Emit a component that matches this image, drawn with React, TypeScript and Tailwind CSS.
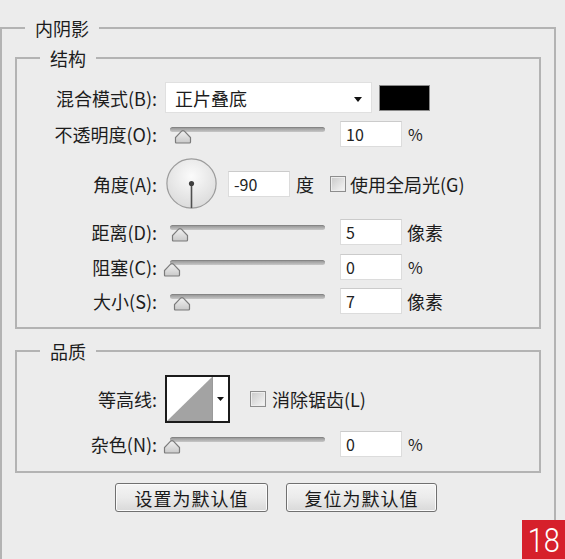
import React from "react";

function Thumb({ left }: { left: number }) {
  return (
    <svg
      className="absolute top-[8px]"
      style={{ left }}
      width="18"
      height="15"
      viewBox="0 0 18 15"
    >
      <defs>
        <linearGradient id="tg" x1="0" y1="0" x2="0" y2="1">
          <stop offset="0" stopColor="#f2f2f2" />
          <stop offset="1" stopColor="#c9c9c9" />
        </linearGradient>
      </defs>
      <path
        d="M1.5 13 L1.5 8.6 L7.6 2.2 Q9 0.9 10.4 2.2 L16.5 8.6 L16.5 13 Q16.5 14 15.5 14 L2.5 14 Q1.5 14 1.5 13 Z"
        fill="url(#tg)"
        stroke="#7b7b7b"
        strokeWidth="1.2"
      />
    </svg>
  );
}

function Slider({ pos }: { pos: number }) {
  return (
    <div className="relative ml-[6px] h-[26px] w-[162px] shrink-0 pl-[7px] pt-[6px]">
      <div className="h-[5px] rounded-full border-t border-[#858585] bg-linear-to-b from-[#9a9a9a] to-[#c8c8c8]" />
      <Thumb left={pos} />
    </div>
  );
}

function Field({ value, ml }: { value: string; ml: string }) {
  return (
    <div
      className={`${ml} flex h-[26px] w-[62px] shrink-0 items-center border border-[#dcdcdc] border-t-[#cbcbcb] bg-white pl-[5px] text-[16px] leading-none text-[#222]`}
    >
      {value}
    </div>
  );
}

function Label({ children }: { children: React.ReactNode }) {
  return (
    <div className="w-[140px] shrink-0 whitespace-nowrap text-right leading-none">
      {children}
    </div>
  );
}

function Check() {
  return (
    <div className="h-[16px] w-[16px] shrink-0 border border-[#8d8d8d] bg-linear-to-br from-[#c9c9c9] to-[#f7f7f7] shadow-[inset_0_0_0_1px_#ededed]" />
  );
}

function SliderRow({
  label,
  pos,
  value,
  unit,
  mt,
}: {
  label: string;
  pos: number;
  value: string;
  unit: string;
  mt: string;
}) {
  return (
    <div className={`${mt} flex h-[26px] items-center`}>
      <Label>{label}</Label>
      <Slider pos={pos} />
      <Field value={value} ml="ml-[15px]" />
      <div
        className={
          unit === "%"
            ? "ml-[6px] text-[16px] leading-none"
            : "ml-[5px] leading-none"
        }
      >
        {unit}
      </div>
    </div>
  );
}

function Dial() {
  return (
    <svg className="ml-[9px] shrink-0" width="51" height="51" viewBox="0 0 51 51">
      <defs>
        <radialGradient id="dg" cx="0.5" cy="0.35" r="0.7">
          <stop offset="0" stopColor="#fbfbfb" />
          <stop offset="1" stopColor="#d9d9d9" />
        </radialGradient>
      </defs>
      <circle cx="25.5" cy="25.5" r="24.6" fill="url(#dg)" stroke="#9c9c9c" strokeWidth="1.2" />
      <line x1="25.5" y1="25.5" x2="25.5" y2="50" stroke="#505050" strokeWidth="1.6" />
      <circle cx="25.5" cy="25.5" r="2.6" fill="#3f3f3f" />
    </svg>
  );
}

function Contour() {
  return (
    <div className="ml-[8px] flex h-[48px] w-[65px] shrink-0 border-2 border-[#1b1b1b] bg-white">
      <svg width="45" height="44" viewBox="0 0 45 44" className="shrink-0">
        <polygon points="0,44 45,0 45,44" fill="#a3a3a3" />
      </svg>
      <div className="flex flex-1 items-center justify-center border-l border-[#9a9a9a]">
        <svg width="7" height="4" viewBox="0 0 7 4">
          <polygon points="0,0 7,0 3.5,4" fill="#111" />
        </svg>
      </div>
    </div>
  );
}

function Button({ children, w }: { children: React.ReactNode; w: string }) {
  return (
    <div
      className={`${w} flex h-[29px] items-center justify-center rounded-[3px] border border-[#707070] bg-linear-to-b from-[#f4f4f4] via-[#ebebeb] to-[#d9d9d9] tracking-[1px] leading-none text-[#1a1a1a] shadow-[inset_0_0_0_1px_#fbfbfb]`}
    >
      {children}
    </div>
  );
}

export default function App() {
  return (
    <div className="relative h-[559px] w-[565px] overflow-hidden bg-[#ececec] pt-[16px] font-['Noto_Sans_CJK_SC','Noto_Sans',sans-serif] text-[18px] text-[#1c1c1c]">
      <fieldset className="w-[556px] border-2 border-[#b3b3b3] pb-[80px]">
        <legend className="ml-[23px] px-[10px] leading-[24px]">内阴影</legend>
        <div className="px-[13px]">
          <fieldset className="mt-[6px] border-2 border-[#b3b3b3] pb-[13px]">
            <legend className="ml-[23px] px-[10px] leading-[24px]">结构</legend>

            <div className="mt-[12px] flex h-[31px] items-center">
              <Label>混合模式(B):</Label>
              <div className="ml-[8px] flex h-[31px] w-[207px] shrink-0 items-center border border-[#e0e0e0] bg-white pl-[9px] pr-[9px]">
                <span className="flex-1 leading-none">正片叠底</span>
                <svg width="8" height="5" viewBox="0 0 8 5" className="mt-[4px]">
                  <polygon points="0,0 8,0 4,5" fill="#111" />
                </svg>
              </div>
              <div className="ml-[7px] h-[26px] w-[51px] shrink-0 border border-[#8a8a8a] bg-black" />
            </div>

            <SliderRow mt="mt-[8px]" label="不透明度(O):" pos={11} value="10" unit="%" />

            <div className="mt-[11px] flex h-[51px] items-center">
              <Label>角度(A):</Label>
              <Dial />
              <Field value="-90" ml="ml-[11px]" />
              <div className="ml-[6px] leading-none">度</div>
              <div className="ml-[16px]">
                <Check />
              </div>
              <div className="ml-[4px] leading-none">使用全局光(G)</div>
            </div>

            <SliderRow mt="mt-[10px]" label="距离(D):" pos={8} value="5" unit="像素" />
            <SliderRow mt="mt-[9px]" label="阻塞(C):" pos={0} value="0" unit="%" />
            <SliderRow mt="mt-[8px]" label="大小(S):" pos={10} value="7" unit="像素" />
          </fieldset>

          <fieldset className="mt-[10px] border-2 border-[#b3b3b3] pb-[14px]">
            <legend className="ml-[23px] px-[10px] leading-[24px]">品质</legend>

            <div className="mt-[12px] flex h-[48px] items-center">
              <Label>等高线:</Label>
              <Contour />
              <div className="ml-[20px]">
                <Check />
              </div>
              <div className="ml-[6px] leading-none">消除锯齿(L)</div>
            </div>

            <SliderRow mt="mt-[8px]" label="杂色(N):" pos={0} value="0" unit="%" />
          </fieldset>

          <div className="mt-[10px] ml-[100px] flex gap-[18px]">
            <Button w="w-[153px]">设置为默认值</Button>
            <Button w="w-[151px]">复位为默认值</Button>
          </div>
        </div>
      </fieldset>

      <div className="absolute bottom-0 right-0 flex h-[39px] w-[43px] items-center justify-center bg-[#d6202b] font-['Roboto',sans-serif] text-[34px] font-light leading-none text-white">
        <span className="scale-x-85">18</span>
      </div>
    </div>
  );
}
